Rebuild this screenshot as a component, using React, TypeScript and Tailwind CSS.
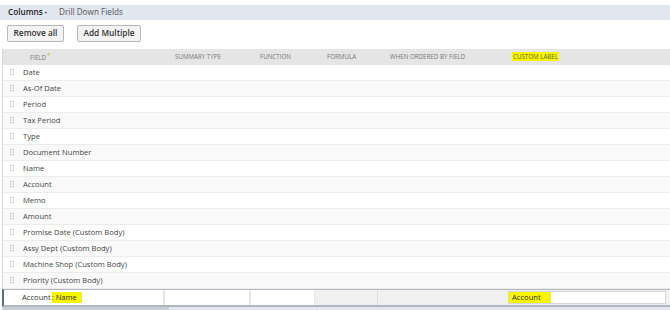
import React from "react";

const rows = [
  "Date",
  "As-Of Date",
  "Period",
  "Tax Period",
  "Type",
  "Document Number",
  "Name",
  "Account",
  "Memo",
  "Amount",
  "Promise Date (Custom Body)",
  "Assy Dept (Custom Body)",
  "Machine Shop (Custom Body)",
  "Priority (Custom Body)",
];

function Grip() {
  return (
    <svg width="4" height="7" viewBox="0 0 4 7" className="shrink-0">
      {[0, 1].map((c) =>
        [0, 1, 2].map((r) => (
          <rect key={`${c}-${r}`} x={c * 2.5} y={r * 2.5} width="1.2" height="1.2" fill="#b5b5b5" />
        ))
      )}
    </svg>
  );
}

export default function App() {
  return (
    <div
      className="h-[310px] w-[670px] overflow-hidden bg-white text-[#333]"
      style={{ fontFamily: '"Open Sans", "Liberation Sans", sans-serif' }}
    >
      <div className="h-[5px]" />
      <div className="flex h-[15px] items-center gap-[12px] bg-[#e1e6ef] pl-[8px] text-[8.2px]">
        <span className="font-semibold text-[#222]">
          Columns <span className="text-[6px]">•</span>
        </span>
        <span className="text-[#555]">Drill Down Fields</span>
      </div>

      <div className="flex gap-[13px] px-[7px] pt-[5px]">
        <button className="h-[17px] w-[57px] rounded-[2px] border border-[#b8b8b8] bg-[#f3f3f3] text-[8.3px] font-semibold text-[#333]">
          Remove all
        </button>
        <button className="h-[17px] w-[64px] rounded-[2px] border border-[#b8b8b8] bg-[#f3f3f3] text-[8.3px] font-semibold text-[#333]">
          Add Multiple
        </button>
      </div>

      <div className="ml-[2px] mt-[7px] border-l border-[#d8d8d8]">
        <div className="flex h-[16px] items-center bg-[#e5e5e5] text-[6.2px] uppercase text-[#777]">
          <div className="w-[172px] pl-[27px]">
            Field<span className="ml-[1px] align-super text-[6px] text-[#e0a800]">*</span>
          </div>
          <div className="w-[85px]">Summary Type</div>
          <div className="w-[67px]">Function</div>
          <div className="w-[63px]">Formula</div>
          <div className="w-[122px]">When Ordered by Field</div>
          <div>
            <span className="bg-[#f6f500] px-[1px] text-[#6a6a3a]">Custom Label</span>
          </div>
        </div>

        {rows.map((r, i) => (
          <div
            key={r}
            className={`flex h-[16px] items-center gap-[9px] border-b border-[#ececec] pl-[7px] text-[7.6px] text-[#444] ${
              i % 2 === 0 ? "bg-white" : "bg-[#f9f9f9]"
            }`}
          >
            <Grip />
            <span>{r}</span>
          </div>
        ))}

        <div className="-ml-[1px] flex h-[18px] items-stretch border-b-[2px] border-l-[2px] border-t border-[#b0b7c2] border-l-[#5b6b86] text-[7.6px] text-[#333]">
          <div className="flex w-[161px] items-center border-r-[2px] border-[#e6e6e6] bg-white pl-[18px]">
            Account <span className="ml-[1px] bg-[#f6f500] pr-[5px]">: Name</span>
          </div>
          <div className="w-[86px] border-r-[2px] border-[#e6e6e6] bg-white" />
          <div className="w-[64px] border-r border-[#e6e6e6] bg-white" />
          <div className="w-[63px] border-r border-[#e0e0e0] bg-[#f0f0f0]" />
          <div className="w-[126px] bg-[#f0f0f0]" />
          <div className="flex flex-1 items-center bg-[#f0f0f0] py-[1px] pl-[4px] pr-[4px]">
            <div className="flex h-full flex-1 items-center border border-[#d6d6d6] bg-white">
              <span className="bg-[#f6f500] pl-[3px] pr-[10px]">Account</span>
            </div>
          </div>
        </div>
        <div className="flex h-[4px]">
          <div className="w-[166px] bg-[#c9ced6]" />
          <div className="flex-1 bg-[#e3e6ea]" />
        </div>
      </div>
    </div>
  );
}
